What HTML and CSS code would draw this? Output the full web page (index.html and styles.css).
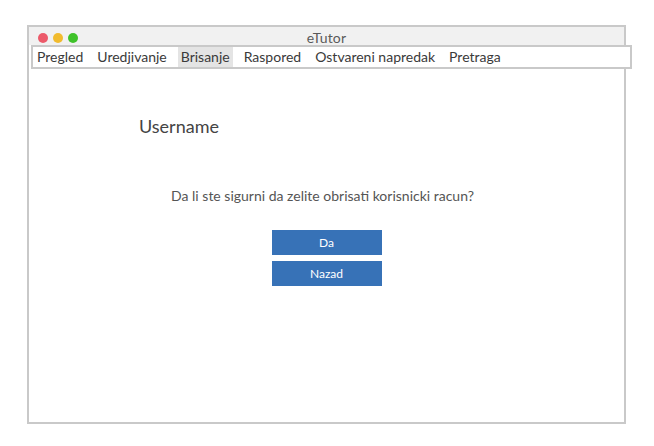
FILE: index.html
```html
<!DOCTYPE html>
<html>
<head>
<meta charset="utf-8">
<link rel="stylesheet" href="styles.css">
</head>
<body>
<div class="window">
  <div class="titlebar">
    <div class="lights">
      <span class="light red"></span>
      <span class="light yellow"></span>
      <span class="light green"></span>
    </div>
    <div class="title">eTutor</div>
  </div>
  <nav class="menu">
    <span class="item">Pregled</span>
    <span class="item">Uredjivanje</span>
    <span class="item active">Brisanje</span>
    <span class="item">Raspored</span>
    <span class="item">Ostvareni napredak</span>
    <span class="item">Pretraga</span>
  </nav>
  <main class="content">
    <div class="username">Username</div>
    <p class="question">Da li ste sigurni da zelite obrisati korisnicki racun?</p>
    <div class="buttons">
      <button class="btn">Da</button>
      <button class="btn">Nazad</button>
    </div>
  </main>
</div>
</body>
</html>
```

FILE: styles.css
```css
* { box-sizing: border-box; }
html, body { margin: 0; padding: 0; background: #fff; }
body {
  font-family: Lato, "Noto Sans", sans-serif;
  padding: 25px 0 0 27px;
}
.window {
  width: 599px;
  height: 399px;
  border: 2px solid #c9c9c9;
  background: #fff;
  display: flex;
  flex-direction: column;
}
.titlebar {
  position: relative;
  height: 18px;
  background: #f1f1f1;
}
.lights {
  display: flex;
  gap: 5px;
  padding: 6px 0 0 9px;
}
.light {
  width: 10px;
  height: 10px;
  border-radius: 50%;
}
.red { background: #ec5a6a; }
.yellow { background: #f1bb2e; }
.green { background: #3fc22a; }
.title {
  position: absolute;
  left: 0;
  right: 0;
  top: 2px;
  text-align: center;
  font-size: 14px;
  letter-spacing: 0.2px;
  color: #5a5a5a;
  line-height: 17px;
}
.menu {
  margin-left: 2px;
  width: 601px;
  height: 24px;
  border: 2px solid #c9c9c9;
  background: #fff;
  display: flex;
  gap: 8px;
  padding-left: 1px;
  flex-shrink: 0;
}
.item {
  padding: 0 3px;
  font-size: 14px;
  line-height: 20px;
  color: #3a3a3a;
}
.item.active { background: #e4e4e4; }
.content {
  flex: 1;
  display: flex;
  flex-direction: column;
}
.username {
  margin: 46px 0 0 110px;
  font-size: 18px;
  line-height: 22px;
  color: #444;
}
.question {
  margin: 50px 8px 0 0;
  text-align: center;
  font-size: 14px;
  line-height: 17px;
  color: #555;
}
.buttons {
  margin-top: 26px;
  display: flex;
  flex-direction: column;
  align-items: center;
  gap: 6px;
}
.btn {
  width: 110px;
  height: 25px;
  border: none;
  background: #3772b7;
  color: #fff;
  font-family: Lato, "Noto Sans", sans-serif;
  font-size: 12px;
  padding: 0;
}
```
